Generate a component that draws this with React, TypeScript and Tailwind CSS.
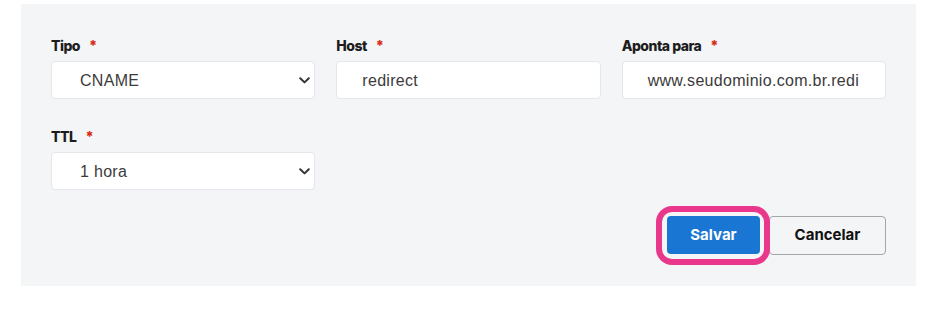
import { ReactNode } from "react";

const Chevron = () => (
  <svg width="11" height="7" viewBox="0 0 11 7" className="shrink-0">
    <path d="M1.2 1.2 L5.5 5.4 L9.8 1.2" fill="none" stroke="#333" strokeWidth="2" strokeLinecap="round" strokeLinejoin="round" />
  </svg>
);

function Field({ label, children }: { label: string; children: ReactNode }) {
  return (
    <div className="flex flex-col">
      <label className="mb-[6px] flex h-[20px] items-center font-['Inter',sans-serif] text-[14px] font-extrabold tracking-[-0.5px] text-[#1d1d1d]">
        {label}
        <span className="ml-[9px] text-[#d72a10]">*</span>
      </label>
      {children}
    </div>
  );
}

const boxCls =
  "flex h-[38px] items-center rounded-[4px] border border-[#e4e6ea] bg-white pt-[1px] font-['Liberation_Sans',Arial,sans-serif] text-[16px] tracking-[0.3px] text-[#3b3b3b]";

function SelectBox({ value }: { value: string }) {
  return (
    <div className={boxCls + " justify-between pl-[28px] pr-[4px]"}>
      <span>{value}</span>
      <Chevron />
    </div>
  );
}

function InputBox({ value }: { value: string }) {
  return (
    <div className={boxCls + " overflow-hidden whitespace-nowrap pl-[25px]"}>
      <span>{value}</span>
    </div>
  );
}

export default function App() {
  return (
    <div className="h-[314px] w-[948px] bg-white pt-[4px]">
      <div className="ml-[21px] h-[282px] w-[895px] bg-[#f4f5f7] px-[30px] pt-[31px]">
        <div className="grid grid-cols-3 gap-x-[21px] gap-y-[27px]">
          <Field label="Tipo"><SelectBox value="CNAME" /></Field>
          <Field label="Host"><InputBox value="redirect" /></Field>
          <Field label="Aponta para"><InputBox value="www.seudominio.com.br.redi" /></Field>
          <Field label="TTL"><SelectBox value="1 hora" /></Field>
        </div>

        <div className="mt-[26px] flex justify-end gap-[9px]">
          <div className="relative">
            <button className="h-[38px] w-[93px] rounded-[4px] bg-[#1976d2] font-['Inter',sans-serif] text-[15px] font-bold text-white">
              Salvar
            </button>
            <span className="pointer-events-none absolute -bottom-[10px] -left-[11px] -right-[10px] -top-[10px] rounded-[16px] border-[6px] border-[#e9388b]" />
          </div>
          <button className="h-[39px] w-[117px] rounded-[4px] border border-[#a3a6ab] bg-[#f4f5f7] font-['Inter',sans-serif] text-[15px] font-bold text-[#111]">
            Cancelar
          </button>
        </div>
      </div>
    </div>
  );
}
